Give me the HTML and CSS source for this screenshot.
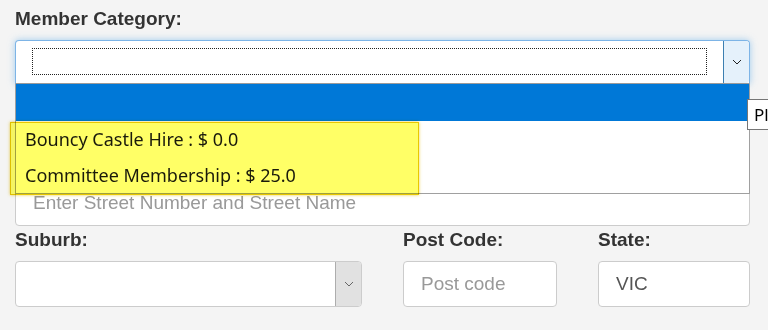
FILE: index.html
```html
<!DOCTYPE html>
<html>
<head>
    <title>Membership Form</title>
    <link rel="stylesheet" href="styles.css">
</head>
<body>
    <form class="member-form">
        <div class="field category-field">
            <label class="field-label">Member Category:</label>
            <div class="select-box focused">
                <div class="select-value"><span class="focus-ring"></span></div>
                <div class="select-btn">
                    <svg width="10" height="6" viewBox="0 0 10 6"><path d="M1 1 L5 5 L9 1" fill="none" stroke="#222" stroke-width="1"/></svg>
                </div>
            </div>
            <ul class="option-list">
                <li class="option selected"></li>
                <li class="option">Bouncy Castle Hire : $ 0.0</li>
                <li class="option">Committee Membership : $ 25.0</li>
            </ul>
            <div class="highlight"></div>
            <div class="tip">Pl</div>
        </div>

        <div class="field address-field">
            <label class="field-label">Address:</label>
            <input class="text-input" type="text" placeholder="Enter Street Number and Street Name">
        </div>

        <div class="row">
            <div class="field">
                <label class="field-label">Suburb:</label>
                <div class="select-box">
                    <div class="select-value"></div>
                    <div class="select-btn grey">
                        <svg width="10" height="6" viewBox="0 0 10 6"><path d="M1 1 L5 5 L9 1" fill="none" stroke="#666" stroke-width="1"/></svg>
                    </div>
                </div>
            </div>
            <div class="field">
                <label class="field-label">Post Code:</label>
                <input class="text-input" type="text" placeholder="Post code">
            </div>
            <div class="field">
                <label class="field-label">State:</label>
                <input class="text-input" type="text" value="VIC">
            </div>
        </div>
    </form>
</body>
</html>
```

FILE: styles.css
```css
body {
    margin: 0;
    padding: 5px 18px 0 15px;
    background-color: #f4f4f4;
    font-family: "Liberation Sans", Arial, sans-serif;
    color: #333;
    overflow: hidden;
}
.member-form {
    display: flex;
    flex-direction: column;
}
.field {
    display: flex;
    flex-direction: column;
    position: relative;
}
.field-label {
    font-size: 19px;
    line-height: 27px;
    font-weight: bold;
    margin-bottom: 8px;
}
.select-box {
    display: flex;
    height: 46px;
    box-sizing: border-box;
    background: #fff;
    border: 1px solid #ccc;
    border-radius: 4px;
}
.select-box.focused {
    height: 44px;
    border-color: #7db4e6;
    border-bottom-color: #9a9a9a;
    border-radius: 4px 4px 0 0;
    box-shadow: 0 0 7px rgba(102,175,233,.6);
}
.select-value {
    flex: 1;
    padding: 7px 16px 7px 16px;
}
.focus-ring {
    display: block;
    height: 27px;
    box-sizing: border-box;
    border: 1px dotted #222;
}
.select-btn {
    width: 25px;
    display: flex;
    align-items: center;
    justify-content: center;
    background: #e5f1fb;
    border-left: 1px solid #3c7fb1;
    border-radius: 0 3px 3px 0;
}
.select-btn.grey {
    background: #e1e1e1;
    border-left: 1px solid #adadad;
}
.option-list {
    position: absolute;
    left: 0;
    top: 79px;
    width: 735px;
    margin: 0;
    padding: 0;
    list-style: none;
    background: #fff;
    border-left: 1px solid #a0a0a0;
    border-right: 1px solid #a0a0a0;
    border-bottom: 1px solid #a0a0a0;
    box-sizing: border-box;
    z-index: 2;
    font-family: "Noto Sans", sans-serif;
    font-size: 18px;
    color: #1a1a1a;
}
.option {
    height: 36px;
    line-height: 36px;
    padding-left: 9px;
}
.option.selected {
    height: 37px;
    background: #0078d7;
}
.highlight {
    position: absolute;
    left: -5px;
    top: 117px;
    width: 407px;
    height: 71px;
    background: #ffff66;
    mix-blend-mode: multiply;
    border: 1px solid #e8c800;
    box-shadow: 0 0 3px rgba(225,190,0,.7);
    z-index: 3;
}
.tip {
    position: absolute;
    left: 732px;
    top: 94px;
    width: 21px;
    height: 31px;
    box-sizing: border-box;
    padding-left: 6px;
    line-height: 29px;
    overflow: hidden;
    white-space: nowrap;
    background: #fff;
    border: 1px solid #767676;
    border-right: none;
    font-family: "Noto Sans", sans-serif;
    font-size: 17px;
    color: #000;
    z-index: 4;
}
.address-field {
    margin-top: 61px;
}
.text-input {
    height: 46px;
    box-sizing: border-box;
    border: 1px solid #ccc;
    border-radius: 4px;
    padding: 0 17px;
    font-family: "Liberation Sans", Arial, sans-serif;
    font-size: 19px;
    color: #555;
    background: #fff;
}
.text-input::placeholder {
    color: #999;
}
.row {
    display: grid;
    grid-template-columns: 347px 154px 152px;
    column-gap: 41px;
}
```
